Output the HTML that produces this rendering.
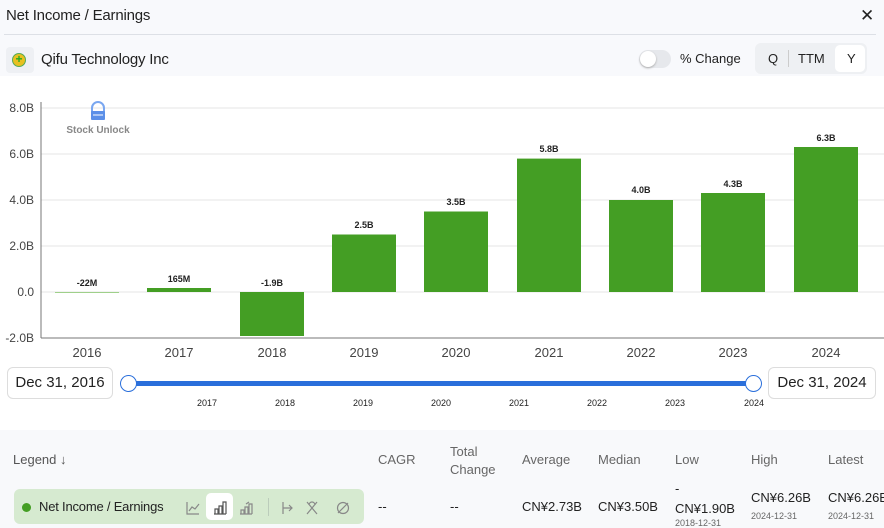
<!DOCTYPE html><html><head><style>
body{margin:0;width:884px;height:528px;overflow:hidden;background:#fff;font-family:"Liberation Sans",sans-serif;color:#222;position:relative}
.a{position:absolute;white-space:nowrap}
</style></head><body>
<div class="a" style="left:0;top:0;width:884px;height:76px;background:#f8f9fc"></div>
<div class="a" style="left:6px;top:7px;font-size:15px;letter-spacing:-0.2px">Net Income / Earnings</div>
<div class="a" style="left:860px;top:6px;font-size:17px">✕</div>
<div class="a" style="left:4px;top:34px;width:872px;height:1px;background:#dde0e6"></div>
<div class="a" style="left:6px;top:47px;width:28px;height:26px;background:#eef0f4;border-radius:4px"></div>
<div class="a" style="left:12px;top:53px;width:14px;height:14px;border-radius:50%;background:#e8c020;border:1px solid #5a5;box-sizing:border-box;color:#2a2;font-size:12px;line-height:11px;text-align:center;font-weight:bold">+</div>
<div class="a" style="left:41px;top:51px;font-size:15px;letter-spacing:-0.2px">Qifu Technology Inc</div>
<div class="a" style="left:639px;top:50px;width:32px;height:18px;border-radius:9px;background:#e6e8ec"></div>
<div class="a" style="left:640px;top:51px;width:16px;height:16px;border-radius:50%;background:#fff;box-shadow:0 1px 2px #aaa"></div>
<div class="a" style="left:680px;top:51px;font-size:13px">% Change</div>
<div class="a" style="left:755px;top:43px;width:112px;height:31px;border-radius:6px;background:#eef0f3"></div>
<div class="a" style="left:835px;top:45px;width:30px;height:27px;border-radius:5px;background:#fff"></div>
<div class="a" style="left:788px;top:50px;width:1px;height:17px;background:#ccc"></div>
<div class="a" style="left:768px;top:51px;font-size:13px">Q</div>
<div class="a" style="left:798px;top:51px;font-size:13px">TTM</div>
<div class="a" style="left:847px;top:51px;font-size:13px">Y</div>
<svg class="a" style="left:0;top:90px" width="884" height="275" font-family="Liberation Sans" >
<g stroke="#e4e4e4"><line x1="41" x2="884" y1="18" y2="18"/><line x1="41" x2="884" y1="64" y2="64"/><line x1="41" x2="884" y1="110" y2="110"/><line x1="41" x2="884" y1="156" y2="156"/><line x1="41" x2="884" y1="202" y2="202"/></g>
<g font-size="12" fill="#444" text-anchor="end"><text x="34" y="22">8.0B</text><text x="34" y="68">6.0B</text><text x="34" y="114">4.0B</text><text x="34" y="160">2.0B</text><text x="34" y="206">0.0</text><text x="34" y="252">-2.0B</text></g>
<line x1="41" x2="41" y1="12" y2="248" stroke="#777"/><line x1="41" x2="884" y1="248" y2="248" stroke="#777"/>
<path d="M92 22V18a6 6 0 0 1 12 0v4" fill="none" stroke="#7aa7f0" stroke-width="2"/><rect x="91" y="21" width="14" height="9" rx="1" fill="#5b8fe8"/><line x1="93" x2="103" y1="25" y2="25" stroke="#fff"/>
<text x="98" y="43" font-size="10" font-weight="bold" fill="#888" text-anchor="middle">Stock Unlock</text>
<g fill="#449e24">
<rect x="55" y="202" width="64" height="1" fill="#9fd08a"/>
<rect x="147" y="198" width="64" height="4"/>
<rect x="240" y="202" width="64" height="44"/>
<rect x="332" y="144.5" width="64" height="57.5"/>
<rect x="424" y="121.5" width="64" height="80.5"/>
<rect x="517" y="68.6" width="64" height="133.4"/>
<rect x="609" y="110" width="64" height="92"/>
<rect x="701" y="103" width="64" height="99"/>
<rect x="794" y="57" width="64" height="145"/></g>
<g font-size="9" font-weight="bold" text-anchor="middle" fill="#222">
<text x="87" y="196">-22M</text><text x="179" y="192">165M</text><text x="272" y="196">-1.9B</text><text x="364" y="138">2.5B</text><text x="456" y="115">3.5B</text><text x="549" y="62">5.8B</text><text x="641" y="103">4.0B</text><text x="733" y="97">4.3B</text><text x="826" y="51">6.3B</text></g>
<g font-size="13" fill="#444" text-anchor="middle"><text x="87" y="267">2016</text><text x="179" y="267">2017</text><text x="272" y="267">2018</text><text x="364" y="267">2019</text><text x="456" y="267">2020</text><text x="549" y="267">2021</text><text x="641" y="267">2022</text><text x="733" y="267">2023</text><text x="826" y="267">2024</text></g>
</svg>
<div class="a" style="left:7px;top:367px;width:106px;height:32px;border:1px solid #ddd;border-radius:6px;box-sizing:border-box;font-size:15px;line-height:30px;text-align:center">Dec 31, 2016</div>
<div class="a" style="left:768px;top:367px;width:108px;height:32px;border:1px solid #ddd;border-radius:6px;box-sizing:border-box;font-size:15px;line-height:30px;text-align:center">Dec 31, 2024</div>
<div class="a" style="left:128px;top:381px;width:626px;height:5px;background:#2a6fdb"></div>
<div class="a" style="left:120px;top:375px;width:17px;height:17px;border-radius:50%;border:1.5px solid #2a6fdb;background:#fff;box-sizing:border-box"></div>
<div class="a" style="left:745px;top:375px;width:17px;height:17px;border-radius:50%;border:1.5px solid #2a6fdb;background:#fff;box-sizing:border-box"></div>
<svg class="a" style="left:0;top:395px" width="884" height="20" font-family="Liberation Sans"><g font-size="9" fill="#222" text-anchor="middle"><text x="207" y="11">2017</text><text x="285" y="11">2018</text><text x="363" y="11">2019</text><text x="441" y="11">2020</text><text x="519" y="11">2021</text><text x="597" y="11">2022</text><text x="675" y="11">2023</text><text x="754" y="11">2024</text></g></svg>
<div class="a" style="left:0;top:430px;width:884px;height:98px;background:#f8f9fb"></div>
<div class="a" style="left:13px;top:452px;font-size:13px;color:#555">Legend ↓</div>
<div class="a" style="left:378px;top:452px;font-size:13px;color:#666">CAGR</div>
<div class="a" style="left:450px;top:443px;font-size:13px;color:#666;line-height:18px">Total<br>Change</div>
<div class="a" style="left:522px;top:452px;font-size:13px;color:#666">Average</div>
<div class="a" style="left:598px;top:452px;font-size:13px;color:#666">Median</div>
<div class="a" style="left:675px;top:452px;font-size:13px;color:#666">Low</div>
<div class="a" style="left:751px;top:452px;font-size:13px;color:#666">High</div>
<div class="a" style="left:828px;top:452px;font-size:13px;color:#666">Latest</div>
<div class="a" style="left:14px;top:489px;width:350px;height:35px;background:#d6ead0;border-radius:6px"></div>
<div class="a" style="left:22px;top:503px;width:9px;height:9px;border-radius:50%;background:#449e24"></div>
<div class="a" style="left:39px;top:499px;font-size:13px;letter-spacing:-0.2px">Net Income / Earnings</div>
<div class="a" style="left:206px;top:493px;width:27px;height:27px;background:#fff;border-radius:5px"></div>
<div class="a" style="left:268px;top:498px;width:1px;height:18px;background:#bcb"></div>
<svg class="a" style="left:180px;top:496px" width="180" height="22" fill="none" stroke="#888" stroke-width="1.2">
<path d="M7 6v12h12M9 15l3-4 3 2 4-5"/>
<path d="M34 18h12M35 18v-5h3v5M39 18v-8h3v8M43 18V6h3v12" stroke="#555"/>
<path d="M60 18h12M61 18v-4h3v4M65 18v-7h3v7M69 18V8h3v10M66 8l3-2"/>
<path d="M103 6v12M103 12h9M109 9l3 3-3 3"/>
<path d="M127 6l10 12M137 6l-10 12M129 9a3 3 0 0 1 6 0"/>
<circle cx="163" cy="12" r="5.5"/><path d="M158 17l10-10"/>
</svg>
<div class="a" style="left:378px;top:499px;font-size:13px">--</div>
<div class="a" style="left:450px;top:499px;font-size:13px">--</div>
<div class="a" style="left:522px;top:499px;font-size:13px">CN¥2.73B</div>
<div class="a" style="left:598px;top:499px;font-size:13px">CN¥3.50B</div>
<div class="a" style="left:675px;top:481px;font-size:13px">-</div>
<div class="a" style="left:675px;top:501px;font-size:13px">CN¥1.90B</div>
<div class="a" style="left:675px;top:518px;font-size:9px;color:#666">2018-12-31</div>
<div class="a" style="left:751px;top:490px;font-size:13px">CN¥6.26B</div>
<div class="a" style="left:751px;top:511px;font-size:9px;color:#666">2024-12-31</div>
<div class="a" style="left:828px;top:490px;font-size:13px">CN¥6.26B</div>
<div class="a" style="left:828px;top:511px;font-size:9px;color:#666">2024-12-31</div>
</body></html>
